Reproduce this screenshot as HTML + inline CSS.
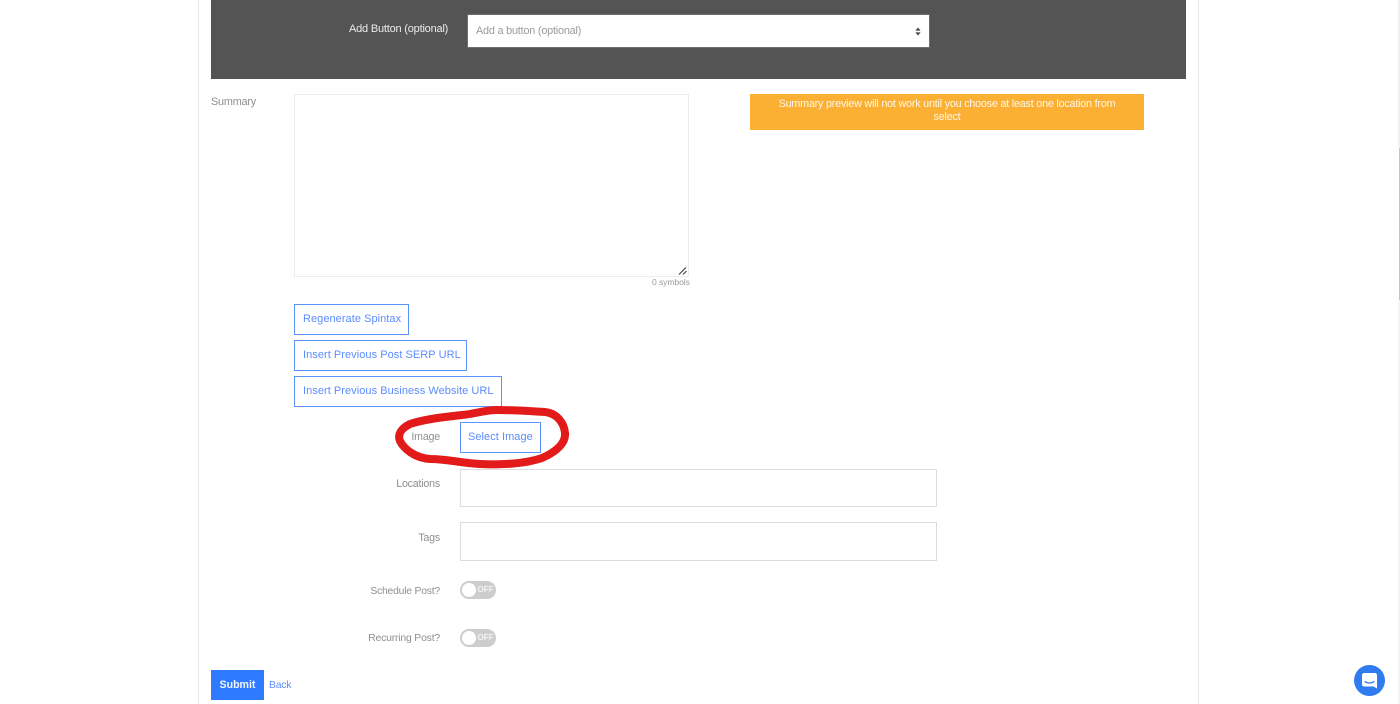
<!DOCTYPE html>
<html>
<head>
<meta charset="utf-8">
<style>
html,body{margin:0;padding:0;width:1400px;height:704px;overflow:hidden;background:#fff;}
body{position:relative;font-family:"Liberation Sans",sans-serif;font-size:10.85px;letter-spacing:-.2px;color:#8b8b8b;}
#w{position:absolute;left:0;top:0;width:1400px;height:704px;filter:blur(.3px);}
.a{position:absolute;white-space:nowrap;line-height:14px;}
.box{position:absolute;box-sizing:border-box;}
.btn{position:absolute;box-sizing:border-box;border:1px solid #5b93ff;color:#5b8cff;height:31px;line-height:28px;padding-left:8px;font-size:11px;letter-spacing:.05px;white-space:nowrap;background:#fff;}
.lbl{position:absolute;text-align:right;white-space:nowrap;line-height:14px;color:#8f8f8f;font-size:10.65px;}
.toggle{position:absolute;left:460px;width:36px;height:18px;border-radius:9px;background:#cdcdcd;}
.toggle i{position:absolute;left:1.5px;top:2px;width:14px;height:14px;border-radius:50%;background:#fff;}
.toggle b{position:absolute;left:17.5px;top:4px;font-size:8px;line-height:10px;font-weight:bold;color:#f2f2f2;letter-spacing:0;}
</style>
</head>
<body>
<div id="w">
<div class="box" style="left:198px;top:0;width:1px;height:704px;background:#e6e6e6;"></div>
<div class="box" style="left:1198px;top:0;width:1px;height:704px;background:#e6e6e6;"></div>
<div class="box" style="left:1398px;top:0;width:2px;height:148px;background:#f1f1f1;"></div>
<div class="box" style="left:1399px;top:148px;width:1px;height:152px;background:#c4c4c4;"></div>
<div class="box" style="left:1398px;top:300px;width:2px;height:404px;background:#f4f4f4;"></div>

<div class="box" style="left:211px;top:0;width:975px;height:79px;background:#545454;"></div>
<div class="a" style="left:349px;top:22px;color:#ececec;font-size:11px;">Add Button (optional)</div>
<div class="box" style="left:467px;top:14px;width:463px;height:34px;background:#fff;border:1px solid #6e6e6e;"></div>
<div class="a" style="left:476px;top:24px;color:#9b9b9b;">Add a button (optional)</div>
<svg class="box" style="left:914px;top:27px;" width="8" height="9" viewBox="0 0 8 9"><path d="M4 0.5L6.6 3.6H1.4Z M4 8.5L6.6 5.4H1.4Z" fill="#444"/></svg>

<div class="a" style="left:211px;top:94.5px;color:#8f8f8f;">Summary</div>
<div class="box" style="left:294px;top:94px;width:395px;height:183px;border:1px solid #ececec;background:#fff;"></div>
<svg class="box" style="left:677px;top:265px;" width="11" height="11" viewBox="0 0 11 11"><path d="M2 9.5L9 2.5M6 9.5L9.5 6" stroke="#444" stroke-width="1.2" fill="none"/></svg>
<div class="a" style="left:652px;top:276px;font-size:8.6px;letter-spacing:-.1px;line-height:12px;color:#9a9a9a;">0 symbols</div>

<div class="box" style="left:750px;top:94px;width:394px;height:36px;background:#fbb034;color:#fff6e6;text-align:center;line-height:13px;padding:4px 20px 0;font-size:10.75px;">Summary preview will not work until you choose at least one location from select</div>

<div class="btn" style="left:294px;top:304px;width:115px;line-height:29px;">Regenerate Spintax</div>
<div class="btn" style="left:294px;top:340px;width:173px;">Insert Previous Post SERP URL</div>
<div class="btn" style="left:294px;top:376px;width:208px;">Insert Previous Business Website URL</div>

<div class="lbl" style="right:960px;top:430px;">Image</div>
<div class="btn" style="left:460px;top:422px;width:81px;padding-left:7px;">Select Image</div>

<div class="lbl" style="right:960px;top:477px;">Locations</div>
<div class="box" style="left:460px;top:469px;width:477px;height:38px;border:1px solid #dcdcdc;"></div>

<div class="lbl" style="right:960px;top:531px;">Tags</div>
<div class="box" style="left:460px;top:522px;width:477px;height:39px;border:1px solid #dcdcdc;"></div>

<div class="lbl" style="right:960px;top:585px;font-size:10.35px;">Schedule Post?</div>
<div class="toggle" style="top:581px;"><i></i><b>OFF</b></div>

<div class="lbl" style="right:960px;top:632px;font-size:10.45px;">Recurring Post?</div>
<div class="toggle" style="top:629px;"><i></i><b>OFF</b></div>

<div class="box" style="left:211px;top:670px;width:53px;height:30px;background:#2f7bff;color:#f2f6ff;font-weight:bold;font-size:10.6px;text-align:center;line-height:30px;letter-spacing:0;">Submit</div>
<div class="a" style="left:269px;top:679px;color:#5b8cff;font-size:10.4px;">Back</div>

<svg class="box" style="left:0;top:0;pointer-events:none;" width="1400" height="704" viewBox="0 0 1400 704">
<path d="M462 415C475 414 484 410 497 410C515 410 530 411 545 412C556 413 564 422 565 433C566 443 556 452 542 458C525 464 500 465 480 464C460 463 448 459 430 459C415 458 404 449 400 441C397 434 402 428 410 424C425 419 445 417 462 415Z" fill="none" stroke="#e21a1a" stroke-width="8" stroke-linejoin="round"/>
</svg>

<svg class="box" style="left:1354px;top:665px;" width="31" height="31" viewBox="0 0 31 31">
<circle cx="15.5" cy="15.5" r="15.5" fill="#2f7bf0"/>
<path d="M10 8H21C22 8 23 9 23 10V23.5L19.5 21.5H10C9 21.5 8 20.5 8 19.5V10C8 9 9 8 10 8Z" fill="#fff"/>
<path d="M11 16.5C13.5 18.5 17.5 18.5 20 16.5" fill="none" stroke="#2f7bf0" stroke-width="1.2" stroke-linecap="round"/>
</svg>
</div>
</body>
</html>
